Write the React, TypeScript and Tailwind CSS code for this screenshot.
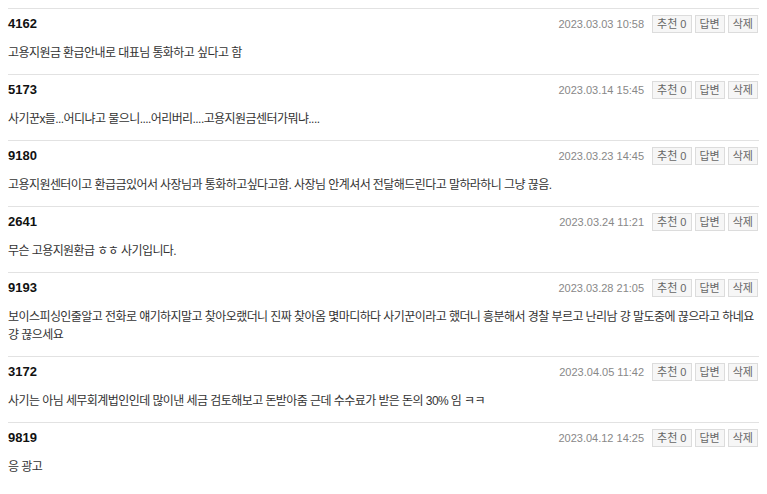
import React from 'react'

const comments = [
  { id: 1, name: '4162', date: '2023.03.03 10:58', body: '고용지원금 환급안내로 대표님 통화하고 싶다고 함' },
  { id: 2, name: '5173', date: '2023.03.14 15:45', body: '사기꾼x들...어디냐고 물으니....어리버리....고용지원금센터가뭐냐....' },
  { id: 3, name: '9180', date: '2023.03.23 14:45', body: '고용지원센터이고 환급금있어서 사장님과 통화하고싶다고함. 사장님 안계셔서 전달해드린다고 말하라하니 그냥 끊음.' },
  { id: 4, name: '2641', date: '2023.03.24 11:21', body: '무슨 고용지원환급 ㅎㅎ 사기입니다.' },
  {
    id: 5,
    name: '9193',
    date: '2023.03.28 21:05',
    body: '보이스피싱인줄알고 전화로 얘기하지말고 찾아오랬더니 진짜 찾아옴 몇마디하다 사기꾼이라고 했더니 흥분해서 경찰 부르고 난리남 걍 말도중에 끊으라고 하네요 걍 끊으세요',
  },
  { id: 6, name: '3172', date: '2023.04.05 11:42', body: '사기는 아님 세무회계법인인데 많이낸 세금 검토해보고 돈받아줌 근데 수수료가 받은 돈의 30% 임 ㅋㅋ' },
  { id: 7, name: '9819', date: '2023.04.12 14:25', body: '응 광고' },
]

function SmallButton({ label }: { label: string }) {
  return (
    <span className="h-[18px] px-[4px] flex items-center border border-[#dcdcdc] bg-[#f6f6f6] text-[11px] text-[#666] leading-none">
      {label}
    </span>
  )
}

export default function App() {
  return (
    <div
      className="w-[767px] h-[494px] bg-white px-2 pt-2 overflow-hidden"
      style={{ fontFamily: '"Liberation Sans", "Noto Sans CJK KR", sans-serif' }}
    >
      {comments.map((c) => (
        <div key={c.id} className="border-t border-[#e2e2e2] pt-[6px] pb-[12px] pr-[1px]">
          <div className="h-[18px] flex items-center justify-between">
            <span className="text-[13px] font-bold text-[#111]">{c.name}</span>
            <div className="flex items-center">
              <span className="text-[11px] text-[#888] mr-[8px]">{c.date}</span>
              <div className="flex items-center gap-[3px]">
                <SmallButton label="추천 0" />
                <SmallButton label="답변" />
                <SmallButton label="삭제" />
              </div>
            </div>
          </div>
          <p className="mt-[11px] text-[12px] leading-[18px] tracking-[-0.57px] text-[#333]">{c.body}</p>
        </div>
      ))}
    </div>
  )
}
